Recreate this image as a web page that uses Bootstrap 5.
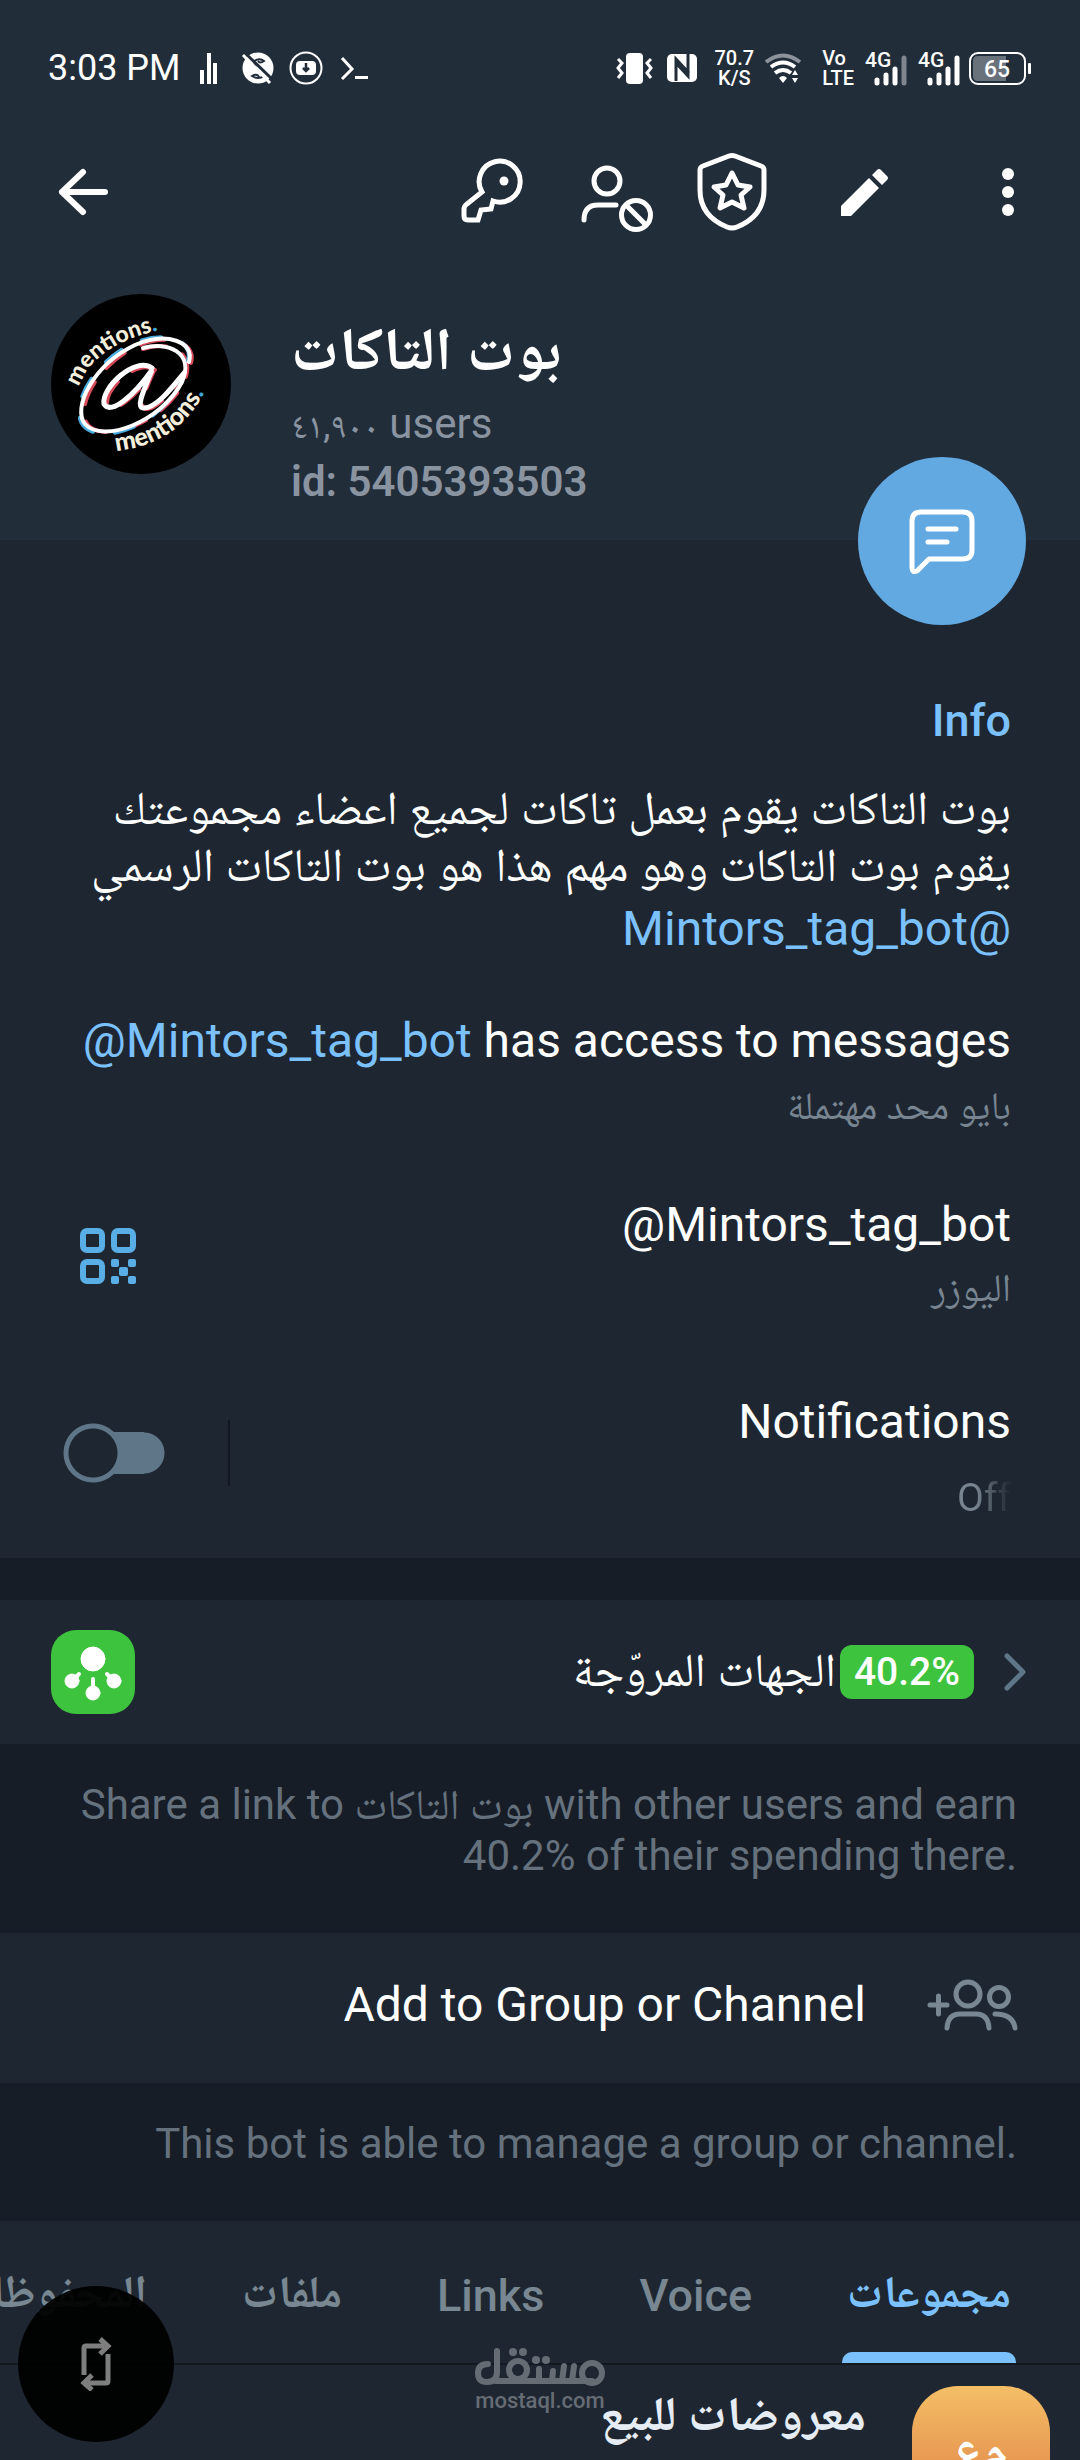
<!DOCTYPE html>
<html lang="en" data-bs-theme="dark">
<head>
<meta charset="utf-8">
<meta name="viewport" content="width=device-width, initial-scale=1">
<title>بوت التاكات</title>
<link href="https://cdn.jsdelivr.net/npm/bootstrap@5.3.0/dist/css/bootstrap.min.css" rel="stylesheet">
<style>
:root{--bar:#222d3a;--panel:#1e2731;--gap:#161d26;--accent:#7bc1fd;--muted:#788591;--edge:69px}
body{background:var(--panel);color:#fff;font-family:Roboto,"Noto Naskh Arabic","Noto Sans Arabic","DejaVu Sans",sans-serif;font-size:48px;line-height:64px}
svg{display:block;flex:none}
.stroke-icon{fill:none;stroke:currentColor;stroke-linecap:round;stroke-linejoin:round}
.top-area{background:var(--bar)}
.statusbar{height:136px;padding:0 48px}
.clock{font-size:36px;line-height:40px}
.status-left{gap:19px}
.tiny-stack{font-size:20px;line-height:20px;font-weight:500}
.appbar{height:112px;padding:0 12px 0 23px}
.tool-btn{width:120px;height:112px;padding:0;border:0;color:#fff;display:flex;align-items:center;justify-content:center}
.gap-a{margin-left:12px}.gap-b{margin-left:24px}
.profile{padding:46px 51px 0;gap:60px;height:292px}
.profile-name{font-size:60px;line-height:64px;font-weight:700;margin:24px 0 14px}
.profile-meta{font-size:42px;line-height:55px;color:#8a94a1}
.count-ar{font-size:36px}
.fab{right:54px;bottom:-85px;width:168px;height:168px;background:#62a9e2;color:#fff;border:0;border-radius:50%;display:flex;align-items:center;justify-content:center;z-index:2}
.info{padding:151px var(--edge) 36px}
.info-title{font-size:45px;line-height:60px;font-weight:500;color:var(--accent);margin:0 0 28px}
.bio{font-size:47px;line-height:57px;margin:0 0 4px}
.link-a{color:var(--accent);text-decoration:none}
.sub{font-size:39px;line-height:48px;color:var(--muted)}
.r-access{margin-top:48px}.r-access .sub{margin-top:9px}
.r-user{margin-top:63px}.r-user .sub{margin-top:7px}
.r-notif{margin-top:78px}.r-notif .sub{margin-top:20px}
.qr-btn{border:0;padding:6px 0 0;margin-left:11px;color:#5aaee6}
.fade-off{background:linear-gradient(90deg,#78848f 35%,#232d37 95%);-webkit-background-clip:text;background-clip:text;color:transparent}
.switch-box{margin:0 0 6px -6px;gap:63px}
.toggle{appearance:none;margin:0;width:102px;height:60px;border:0;border-radius:30px;background:radial-gradient(circle at 30px 30px,var(--panel) 24px,#5f7688 25px,#5f7688 29px,transparent 30px),linear-gradient(#5f7688,#5f7688) 30px 9px/51px 42px no-repeat,radial-gradient(circle at 81px 30px,#5f7688 20px,transparent 21px)}
.vline{width:2px;height:66px;background:#11171e}
.spacer{height:42px;background:var(--gap)}
.list-line{background:var(--panel);color:#fff;text-decoration:none}
.promo{height:144px;padding:0 53px 0 51px}
.promo-name{font-size:47px;line-height:56px;padding-bottom:4px}
.pct{background:#3ec33f;border-radius:12px;font-size:39px;line-height:54px;font-weight:500;padding:0 14px;margin:0 29px 0 4px}
.hint{background:var(--gap);font-size:42px;line-height:51px;color:#65717d;text-align:right;margin:0;padding:35px 63px 52px}
.add{height:150px;padding:0 61px 6px}
.add svg{margin-left:61px}
.tabs{height:144px;padding:0 var(--edge);gap:95px;border-bottom:2px solid #121920;overflow:hidden}
.tab-btn{border:0;background:none;padding:8px 0 0;font-size:45px;line-height:64px;font-weight:500;color:#788792;white-space:nowrap;position:relative;height:142px;flex:none}
.tab-ar{font-weight:700;padding-top:4px}
.tab-ar{padding:0 0 1px}
.tab-btn.active{color:var(--accent)}
.tab-btn.active::after{content:"";position:absolute;left:-5px;right:-5px;bottom:0;height:11px;border-radius:10px 10px 0 0;background:var(--accent)}
.chat{padding:21px 30px 0;gap:46px}
.chat-name{line-height:56px;font-weight:700;color:#e6ecf4}
.chat-pic{width:138px;height:138px;border-radius:46px;background:linear-gradient(#f4be66,#dd7a42);font-weight:700;line-height:126px}
.rotate-btn{left:18px;bottom:18px;width:156px;height:156px;border:0;border-radius:50%;background:rgba(0,0,0,.95);color:#7e7e7e;display:flex;align-items:center;justify-content:center}
.wm{left:0;right:0;bottom:46px;color:#666c74;font-size:22px;line-height:26px;font-weight:500;pointer-events:none}
</style>
</head>
<body>
<div class="vh-100 overflow-hidden position-relative">
<header class="top-area position-relative">
  <div class="statusbar d-flex align-items-center justify-content-between">
    <div class="status-left d-flex align-items-center">
      <span class="clock">3:03 PM</span>
      <svg width="170" height="36" viewBox="0 0 170 36" fill="#fff">
        <path d="M0 20h4v14H0zM7 3h4v31H7zM13 13h4v21h-4z"/>
        <circle cx="58" cy="18" r="15.500"/>
        <path d="M53 12q6-5 11-1q-4 3-6 0M64 26q-6 4-12 0q5-3 7 1M55 13q-2 2 1 4" fill="none" stroke="#222d3a" stroke-width="2"/>
        <path d="M45 3l28 27" stroke="#222d3a" stroke-width="3"/><path d="M43 5l27 28" stroke="#fff" stroke-width="3"/>
        <circle cx="106" cy="18" r="15.500" fill="none" stroke="#fff" stroke-width="2"/><rect x="96" y="11" width="20" height="14" rx="4"/>
        <path d="M106 13v8M103 18l3 3l3-3" stroke="#222d3a" stroke-width="2.500" fill="none"/>
        <path d="M142 8l10 11l-10 10" fill="none" stroke="#fff" stroke-width="3"/><path d="M155 26h13v3h-13z"/>
      </svg>
    </div>
    <div class="d-flex align-items-center">
      <svg width="82" height="36" viewBox="0 0 82 36" fill="#fff">
        <rect x="10" y="3" width="17" height="31" rx="4"/>
        <path d="M2 9l4 4l-4 5l4 5l-4 5M35 9l-4 4l4 5l-4 5l4 5" fill="none" stroke="#fff" stroke-width="3"/>
        <rect x="51" y="4" width="30" height="28" rx="5"/>
        <path d="M60 31V9l13 14M72 4v22L60 13" fill="none" stroke="#222d3a" stroke-width="3"/>
      </svg>
      <div class="tiny-stack text-center ms-3">70.7<br>K/S</div>
      <svg class="ms-2" width="60" height="36" viewBox="-2 0 60 36" fill="none" stroke="#fff" stroke-width="4">
        <path d="M2 12q17-13 34 0" stroke="#8c939b"/><path d="M7 17q12-9 24 0M11 23q8-6 16 0"/>
        <path d="M15 28q4-4 8 0l-4 5zM28 25l3-5l3 5zM28 28h6l-3 5z" fill="#fff" stroke="none"/>
      </svg>
      <div class="tiny-stack">Vo<br>LTE</div>
      <svg class="ms-2" width="170" height="38" viewBox="0 0 170 38" fill="#fff" font-family="Roboto" font-weight="500">
        <text x="3" y="18" font-size="21">4G</text>
        <path d="M15 34v-3M24 34v-8M33 34V20M68 34v-3M77 34v-8M86 34V20M95 34V9" stroke="#fff" stroke-width="5" stroke-linecap="round"/><path d="M42 34V9" stroke="#7f868e" stroke-width="5" stroke-linecap="round"/>
        <text x="56" y="18" font-size="21">4G</text>
        <rect x="108" y="4" width="55" height="31" rx="8" fill="none" stroke="#fff" stroke-width="2"/><path d="M116 7h28v25h-28q-5 0-5-5V12q0-5 5-5z" fill="#69717b"/>
        <rect x="166" y="14" width="3" height="11" rx="1"/><text x="122" y="28" font-size="23">65</text>
      </svg>
    </div>
  </div>
  <nav class="appbar d-flex align-items-center" aria-label="Toolbar">
    <button class="btn tool-btn me-auto" aria-label="Back"><svg class="stroke-icon" width="56" height="56" viewBox="0 0 56 56" stroke-width="6"><path d="M50 28H7M28 8L7 28l21 20"/></svg></button>
    <button class="btn tool-btn" aria-label="Key"><svg class="stroke-icon" width="72" height="72" viewBox="0 -2 72 72" stroke-width="5"><path d="M26 34A20.500 20.500 0 1 1 37 43l-2 8l-10 1l-3 10H12q-4 0-4-4v-7q0-3 3-5z" stroke-linejoin="miter"/><circle cx="48" cy="23" r="4.500" fill="#fff" stroke="none"/></svg></button>
    <button class="btn tool-btn" aria-label="Restrict user"><svg class="stroke-icon" width="90" height="84" viewBox="0 -2 90 84" stroke-width="5"><circle cx="40" cy="29" r="13"/><path d="M17 68q0-15 14-15h18"/><circle cx="69" cy="63" r="14.500"/><path d="M59 53l20 20"/></svg></button>
    <button class="btn tool-btn" aria-label="Admin rights"><svg class="stroke-icon" width="76" height="84" viewBox="0 0 76 84" stroke-width="5"><path d="M35 6q3-1 6 0l26 10q3 1 3 4v20q0 26-27 37q-5 2-10 0Q6 66 6 40V20q0-3 3-4z"/><path d="M38 23l6 12l12 2l-9 8l3 13l-12-6l-12 6l3-13l-9-8l12-2z"/></svg></button>
    <button class="btn tool-btn gap-a" aria-label="Edit"><svg width="56" height="56" viewBox="0 0 56 56" fill="#fff"><path d="M5 52V42L33 14l10 10L15 52zM36 11l5-5q2-2 4 0l6 6q2 2 0 4l-5 5z"/></svg></button>
    <button class="btn tool-btn gap-b" aria-label="More"><svg width="16" height="52" viewBox="0 0 16 52" fill="#fff"><circle cx="8" cy="8" r="6"/><circle cx="8" cy="26" r="6"/><circle cx="8" cy="44" r="6"/></svg></button>
  </nav>
  <div class="profile d-flex">
    <svg width="180" height="180" viewBox="0 0 180 180" role="img" aria-label="mentions">
      <defs><path id="arcTop" d="M28 93Q44 46 125 33"/><path id="arcBottom" d="M65 157Q134 150 160 84"/></defs>
      <circle cx="90" cy="90" r="90"/>
      <g font-family="Lato,sans-serif" font-weight="900" font-size="23" fill="#f4efdc"><text><textPath href="#arcTop">mentions<tspan fill="#3fa6d9">.</tspan></textPath></text><text font-size="25"><textPath href="#arcBottom">mentions<tspan fill="#3fa6d9">.</tspan></textPath></text></g>
      <g fill="none" stroke-linecap="round">
        <g stroke="#d84a5a" stroke-width="4" stroke-dasharray="24 18"><path d="M140 69C146 49 118 38 86 52C44 72 24 115 37 131C54 150 112 129 133 88C146 58 118 46 92 55"/><path d="M104 76C86 64 54 94 56 111C62 122 86 101 103 77C92 100 88 115 95 115C107 115 120 97 135 80"/></g>
        <g stroke="#4aa9de" stroke-width="4" stroke-dasharray="20 22"><path d="M137 67C143 47 115 36 83 49C40 69 19 114 32 131C50 153 110 131 129 88"/></g>
        <g stroke="#fff"><path stroke-width="4" d="M138 68C144 48 116 37 84 51C42 71 21 114 34 130C52 150 110 128 131 88C144 58 116 47 92 54"/><path stroke-width="5" d="M101 74C84 62 50 94 53 110C60 122 84 100 101 76C91 100 85 114 93 114C105 114 119 96 133 79"/></g>
      </g>
    </svg>
    <div>
      <h1 class="profile-name">بوت التاكات</h1>
      <div class="profile-meta"><span class="count-ar">٤١,٩٠٠</span> users</div>
      <div class="profile-meta"><span class="fw-semibold">id: 5405393503</span></div>
    </div>
  </div>
  <button class="fab position-absolute" aria-label="Message"><svg class="stroke-icon" width="72" height="72" viewBox="0 0 72 72" stroke-width="5"><path d="M15 7h42q9 0 9 9v29q0 9-9 9H23L11 66q-5 2-5-3V16q0-9 9-9z"/><path d="M22 24h28M22 37h19"/></svg></button>
</header>
<main>
  <section class="info text-end">
    <h2 class="info-title">Info</h2>
    <p class="bio" dir="rtl">بوت التاكات يقوم بعمل تاكات لجميع اعضاء مجموعتك<br>يقوم بوت التاكات وهو مهم هذا هو بوت التاكات الرسمي</p>
    <div dir="rtl"><a class="link-a" href="#">@Mintors_tag_bot</a></div>
    <div class="r-access"><div><a class="link-a" href="#">@Mintors_tag_bot</a> has access to messages</div><div class="sub">بايو محد مهتملة</div></div>
    <div class="r-user d-flex align-items-center justify-content-between">
      <button class="btn qr-btn" aria-label="QR code"><svg width="56" height="56" viewBox="0 0 56 56" fill="currentColor"><g fill="none" stroke="currentColor" stroke-width="6"><rect x="3" y="3" width="19" height="19" rx="4"/><rect x="34" y="3" width="19" height="19" rx="4"/><rect x="3" y="34" width="19" height="19" rx="4"/></g><rect x="31" y="31" width="8" height="8" rx="2"/><rect x="48" y="31" width="8" height="8" rx="2"/><rect x="39" y="39" width="9" height="9" rx="2"/><rect x="31" y="48" width="8" height="8" rx="2"/><rect x="48" y="48" width="8" height="8" rx="2"/></svg></button>
      <div><div>@Mintors_tag_bot</div><div class="sub">اليوزر</div></div>
    </div>
    <div class="r-notif d-flex align-items-center justify-content-between">
      <div class="switch-box d-flex align-items-center"><input class="toggle" type="checkbox" role="switch" id="notif"><span class="vline"></span></div>
      <label for="notif"><span class="d-block">Notifications</span><span class="sub d-block"><span class="fade-off">Off</span></span></label>
    </div>
  </section>
  <div class="spacer"></div>
  <a class="list-line promo d-flex align-items-center" href="#">
    <svg width="84" height="84" viewBox="0 0 84 84"><rect width="84" height="84" rx="25" fill="#3ec33f"/><g fill="#fff" stroke="#fff" stroke-linecap="round"><circle cx="42" cy="29" r="12"/><circle cx="21" cy="51" r="7"/><circle cx="63" cy="51" r="7"/><circle cx="42" cy="63" r="7"/><path d="M21 51l7-7M63 51l-7-7M42 63V49" stroke-width="4"/></g></svg>
    <span class="promo-name ms-auto">الجهات المروّجة</span><span class="pct">40.2%</span>
    <svg class="stroke-icon" width="24" height="40" viewBox="0 0 24 40" stroke-width="5" color="#5f7688"><path d="M4 4l16 16L4 36"/></svg>
  </a>
  <p class="hint">Share a link to بوت التاكات with other users and earn<br>40.2% of their spending there.</p>
  <a class="list-line add d-flex align-items-center justify-content-end" href="#">Add to Group or Channel
    <svg class="stroke-icon" width="92" height="54" viewBox="0 0 92 54" stroke-width="5" color="#788792"><path d="M3 27h17M11.500 18v18M20 50q1-14 13-14h16q12 0 13 14M68 36q18 0 20 14"/><circle cx="41" cy="16" r="12"/><circle cx="72" cy="19" r="9.500"/></svg></a>
  <p class="hint">This bot is able to manage a group or channel.</p>
  <div class="tabs d-flex" dir="rtl" role="tablist">
    <button class="tab-btn tab-ar active" role="tab" aria-selected="true">مجموعات</button>
    <button class="tab-btn" role="tab">Voice</button>
    <button class="tab-btn" role="tab">Links</button>
    <button class="tab-btn tab-ar" role="tab">ملفات</button>
    <button class="tab-btn tab-ar" role="tab">المحفوظات</button>
  </div>
  <div class="chat d-flex" dir="rtl"><div class="chat-pic text-center">م‌ع</div><div class="chat-name">معروضات للبيع</div></div>
</main>
<div class="wm position-absolute d-flex flex-column align-items-center">
  <svg width="132" height="42" viewBox="0 0 132 42" fill="none" stroke="currentColor" stroke-width="6" stroke-linecap="round" role="img" aria-label="مستقل"><path d="M14 18q-10 0-10 9q0 9 9 9q10 0 10-10V5M22 35h96M65 35V23M78 35l1-10M88 35l2-15M98 35l2-15"/><circle cx="44" cy="24" r="9"/><circle cx="118" cy="27" r="10"/><g fill="currentColor" stroke="none"><circle cx="39" cy="6" r="4"/><circle cx="49" cy="6" r="4"/><circle cx="62" cy="14" r="4"/><circle cx="72" cy="14" r="4"/></g></svg>
  <div>mostaql.com</div>
</div>
<button class="rotate-btn position-absolute" aria-label="Rotate"><svg width="32" height="54" viewBox="0 0 32 54" fill="none" stroke="currentColor" stroke-width="5"><path d="M4 38V11q0-2 2-2h18M28 17v27q0 2-2 2H8"/><path d="M20 2l8 7l-8 8M12 38l-8 8l8 7"/></svg></button>
</div>
<script src="https://cdn.jsdelivr.net/npm/bootstrap@5.3.0/dist/js/bootstrap.bundle.min.js"></script>
</body>
</html>
